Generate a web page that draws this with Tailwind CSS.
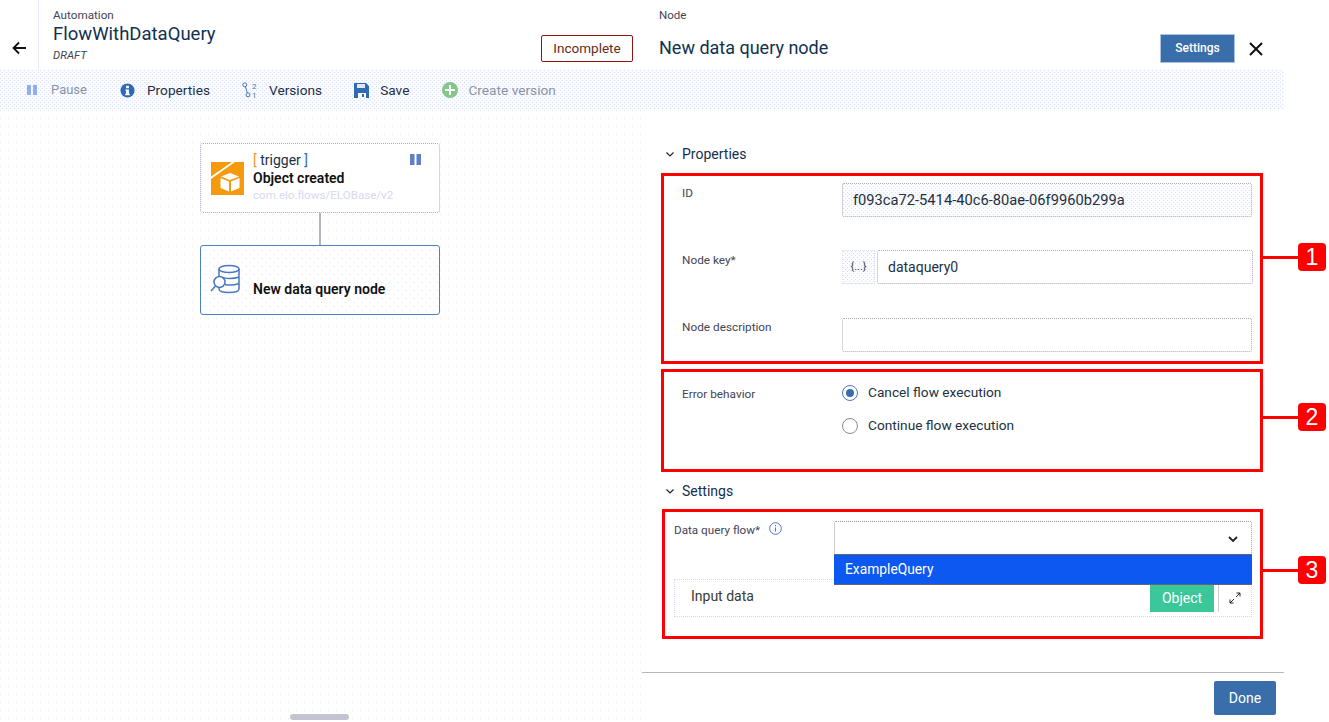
<!DOCTYPE html>
<html lang="en">
<head>
  <meta charset="UTF-8">
  <title>FlowWithDataQuery</title>
  <script src="https://cdn.jsdelivr.net/npm/@tailwindcss/browser@4"></script>
</head>
<body class="bg-white text-[#22303f] font-['Roboto',sans-serif] w-[1329px] h-[722px] overflow-hidden relative">
  <div class="flex flex-col w-[1284px] h-[722px]">
    <!-- header -->
    <header class="flex h-[70px] shrink-0">
      <div class="w-[642px] flex">
        <div class="w-[39px] border-r border-[#eaeafb] flex items-center pt-[26px] pl-[12px]">
          <svg class="w-[14px] h-[14px]" viewBox="0 0 14 14" fill="none" stroke="#111" stroke-width="1.800"><path d="M14 7H1.500M7 1.500 1.500 7 7 12.500"/></svg>
        </div>
        <div class="pl-[14px] pt-[9px] flex-1">
          <div class="text-[11.7px] leading-[13px] text-[#445]">Automation</div>
          <div class="text-[18.5px] leading-[24px] text-[#12304f]">FlowWithDataQuery</div>
          <div class="text-[11.3px] leading-[13px] mt-[3px] italic text-[#445]">DRAFT</div>
        </div>
        <div class="pt-[35px] pr-[9px]">
          <div class="w-[92px] h-[27px] border border-[#8e1414] rounded-[2px] text-[13.5px] text-[#6a2a1a] flex items-center justify-center">Incomplete</div>
        </div>
      </div>
      <div class="w-[642px] pl-[17px] relative">
        <div class="text-[11.5px] leading-[13px] pt-[9px] text-[#445]">Node</div>
        <div class="flex items-center mt-[12px] h-[29px]">
          <div class="text-[18px] text-[#12304f] flex-1 pb-[2px]">New data query node</div>
          <div class="w-[75px] h-[29px] bg-[#3a6eab] border border-[#a9c4e4] text-white text-[12px] font-medium flex items-center justify-center pb-[1px]">Settings</div>
          <svg class="w-[14px] h-[14px] ml-[14px] mr-[21px]" viewBox="0 0 14 14" fill="none" stroke="#111" stroke-width="2"><path d="M1 1l12 12M13 1 1 13"/></svg>
        </div>
      </div>
    </header>

    <!-- toolbar -->
    <div class="h-[40px] shrink-0 bg-[#fbfcff] bg-[conic-gradient(at_1px_1px,transparent_75%,#d8deff_0),conic-gradient(at_1px_1px,transparent_75%,#d8deff_0)] bg-[size:4px_4px] bg-[position:0_0,2px_2px] flex items-center pl-[26px] text-[13.7px] text-[#22303f]">
      <svg class="w-[12px] h-[12px]" viewBox="0 0 12 12" fill="#8fb0ee"><path d="M1 1h4v10H1zM7 1h4v10H7z"/></svg>
      <span class="ml-[13px] text-[13px] text-[#8a93a3]">Pause</span>
      <svg class="w-[15px] h-[15px] ml-[33px]" viewBox="0 0 16 16"><circle cx="8" cy="8" r="7.500" fill="#2f6bb0"/><path d="M6.500 3h3v2.500h-3zM5.800 7h3.700v4.500h1V13H5.500v-1.500h1V8.300h-.7z" fill="#fff"/></svg>
      <span class="ml-[12px]">Properties</span>
      <svg class="w-[16px] h-[16px] ml-[32px]" viewBox="0 0 16 16" fill="none" stroke="#3f74c0" font-family="Roboto, sans-serif"><circle cx="2.800" cy="2.800" r="2"/><circle cx="6" cy="12.800" r="2"/><path d="M3.500 4.800l1.800 6"/><text x="10" y="6.500" font-size="8" fill="#3f74c0" stroke="none">2</text><text x="10" y="15.500" font-size="8" fill="#3f74c0" stroke="none">1</text></svg>
      <span class="ml-[11px]">Versions</span>
      <svg class="w-[15px] h-[15px] ml-[32px]" viewBox="0 0 15 15"><path d="M0 0h12l3 3v12H0z" fill="#2f6bb0"/><path d="M3 1h8v4H3z" fill="#dfe8f8"/><path d="M4 10h8v5H4z" fill="#fff"/><path d="M8 11h2v3H8z" fill="#2f6bb0"/></svg>
      <span class="ml-[11px]">Save</span>
      <svg class="w-[16px] h-[16px] ml-[33px]" viewBox="0 0 16 16"><circle cx="8" cy="8" r="8" fill="#84c788"/><path d="M7 3h2v4h4v2H9v4H7V9H3V7h4z" fill="#fff"/></svg>
      <span class="ml-[10px] text-[#8a93a3]">Create version</span>
    </div>

    <main class="flex flex-1 min-h-0">
      <!-- canvas -->
      <section class="w-[642px] relative bg-[conic-gradient(at_1px_1px,transparent_75%,#e0e0ff_0)] bg-[size:8px_8px]">
        <div class="absolute left-[200px] top-[33px] w-[240px] h-[70px] bg-white border border-dotted border-[#a9a9c8] rounded-[3px] flex">
          <svg class="w-[33px] h-[33px] ml-[10px] mt-[18px] shrink-0" viewBox="0 0 33 33"><path d="M0 0h33v33H0z" fill="#f59a0c"/><path d="M0 17 24 0h-3L0 14.500z" fill="#fff"/><path d="M19 11l9 3.500-9 3.500-9-3.500z" fill="#fff"/><path d="M9.500 16l8.500 3.500v10L9.500 26zM20 19.500l8.500-3.500v10L20 29.500z" fill="#fff"/></svg>
          <div class="ml-[9px] pt-[8px] whitespace-nowrap">
            <div class="text-[14px] leading-[17px]"><span class="text-[#e89b2e]">[</span> trigger <span class="text-[#2f6bb0]">]</span></div>
            <div class="text-[14px] leading-[18px] font-semibold text-[#111]">Object created</div>
            <div class="text-[11.6px] leading-[17px] text-[#d8d8f0]">com.elo.flows/ELOBase/v2</div>
          </div>
          <svg class="absolute right-[18px] top-[10px] w-[11px] h-[11px]" viewBox="0 0 11 11" fill="#5f7fc8"><path d="M0 0h4.500v11H0zM6.500 0H11v11H6.500z"/></svg>
        </div>
        <div class="absolute left-[319px] top-[103px] w-[2px] h-[32px] bg-[#b4b4c2]"></div>
        <div class="absolute left-[200px] top-[135px] w-[240px] h-[70px] border border-[#4c7fc4] rounded-[3px] bg-white bg-[conic-gradient(at_1px_1px,transparent_75%,#e2e2ff_0),conic-gradient(at_1px_1px,transparent_75%,#e2e2ff_0)] bg-[size:8px_8px] bg-[position:0_0,4px_4px]">
          <svg class="absolute left-[9px] top-[18px] w-[32px] h-[32px]" viewBox="0 0 32 32" fill="none" stroke="#4a78c4" stroke-width="1.500"><ellipse cx="19" cy="5" rx="10" ry="3.500"/><path d="M9 5v20c0 2 4 3.500 10 3.500S29 27 29 25V5M12 13c3 2 12 2 17 0M15 20.500c5 1 10 .5 14-1"/><circle cx="9.500" cy="18" r="5.500" fill="#fff"/><path d="M5.500 22 1 27"/></svg>
          <div class="absolute left-[52px] top-[33px] text-[14px] font-semibold text-[#111] whitespace-nowrap">New data query node</div>
        </div>
        <div class="absolute left-[290px] top-[604px] w-[59px] h-[6px] rounded-[3px] bg-[#c4c4d0]"></div>
      </section>

      <!-- node panel -->
      <section class="w-[642px] flex flex-col">
        <div class="flex-1 pt-[34px]">
          <div class="flex items-center h-[20px] pl-[24px] text-[14px] text-[#12304f]">
            <svg class="w-[8px] h-[5px] mr-[8px]" viewBox="0 0 8 5" fill="none" stroke="#223" stroke-width="1.200"><path d="M.5.500 4 4 7.500.500"/></svg>
            Properties
          </div>
          <div class="pl-[40px] mt-[19px] text-[11.8px] text-[#445]">
            <div class="flex h-[34px]">
              <div class="w-[160px] pt-[2px]">ID</div>
              <div class="w-[410px] border border-dotted border-[#aab] bg-[#fbfcff] bg-[conic-gradient(at_1px_1px,transparent_75%,#d8deff_0),conic-gradient(at_1px_1px,transparent_75%,#d8deff_0)] bg-[size:4px_4px] bg-[position:0_0,2px_2px] rounded-[2px] text-[14.700px] text-[#22303f] pl-[10px] flex items-center">f093ca72-5414-40c6-80ae-06f9960b299a</div>
            </div>
            <div class="flex h-[34px] mt-[33px]">
              <div class="w-[160px] pt-[2px]">Node key*</div>
              <div class="w-[33px] border border-dotted border-[#dde] bg-[#fbfcff] bg-[conic-gradient(at_1px_1px,transparent_75%,#d8deff_0),conic-gradient(at_1px_1px,transparent_75%,#d8deff_0)] bg-[size:4px_4px] bg-[position:0_0,2px_2px] text-[11px] flex items-center justify-center">{...}</div>
              <div class="w-[376px] ml-[2px] border border-dotted border-[#aab] rounded-[2px] text-[14px] text-[#22303f] pl-[10px] flex items-center">dataquery0</div>
            </div>
            <div class="flex h-[34px] mt-[34px]">
              <div class="w-[160px] pt-[1px]">Node description</div>
              <div class="w-[410px] border border-dotted border-[#aab] rounded-[2px]"></div>
            </div>
            <div class="flex mt-[33px]">
              <div class="w-[160px] pt-[1px]">Error behavior</div>
              <div class="text-[13.7px] text-[#22303f]">
                <div class="flex items-center h-[16px]">
                  <span class="w-[16px] h-[16px] rounded-full border border-[#4a78c4] flex items-center justify-center"><span class="w-[8px] h-[8px] rounded-full bg-[#3a6eab]"></span></span>
                  <span class="ml-[10px] pb-[1px]">Cancel flow execution</span>
                </div>
                <div class="flex items-center h-[16px] mt-[17px]">
                  <span class="w-[16px] h-[16px] rounded-full border border-[#889]"></span>
                  <span class="ml-[10px] pb-[1px]">Continue flow execution</span>
                </div>
              </div>
            </div>
          </div>
          <div class="flex items-center h-[20px] pl-[24px] mt-[47px] text-[14px] text-[#12304f]">
            <svg class="w-[8px] h-[5px] mr-[8px]" viewBox="0 0 8 5" fill="none" stroke="#223" stroke-width="1.200"><path d="M.5.500 4 4 7.500.500"/></svg>
            Settings
          </div>
          <div class="pl-[32px] mt-[20px]">
            <div class="flex h-[58px]">
              <div class="w-[160px] pt-[1px] text-[11.7px] text-[#445] flex items-start">
                <span>Data query flow*</span>
                <svg class="w-[13px] h-[13px] ml-[9px]" viewBox="0 0 13 13" fill="none" stroke="#4a78c4"><circle cx="6.500" cy="6.500" r="5.800"/><path d="M6.500 5.500v4M6.500 3v1.300"/></svg>
              </div>
              <div class="w-[418px] relative">
                <div class="h-[34px] border border-dotted border-[#99a] rounded-[2px] flex items-end justify-end pr-[13px] pb-[11px]">
                  <svg class="w-[10px] h-[7px]" viewBox="0 0 10 7" fill="none" stroke="#222" stroke-width="1.800"><path d="M1 1l4 4 4-4"/></svg>
                </div>
                <div class="absolute left-0 top-[33px] w-full h-[31px] z-10 bg-[#0c58f0] border-y border-[#666] text-white text-[13.8px] pl-[11px] flex items-center">ExampleQuery</div>
              </div>
            </div>
            <div class="w-[578px] h-[38px] border border-dotted border-[#d5d5f0] flex items-center pl-[16px] text-[14px] text-[#22303f]">
              <span class="flex-1 text-[#3a3a30] pb-[3px]">Input data</span>
              <span class="w-[64px] h-[27px] bg-[#3cc79a] text-white flex items-center justify-center">Object</span>
              <span class="w-[1px] h-[27px] bg-[#ccc] ml-[4px]"></span>
              <svg class="w-[12px] h-[12px] ml-[10px] mr-[10px]" viewBox="0 0 12 12" fill="none" stroke="#111" stroke-width=".9"><path d="M7 5l4-4M7.500 1H11v3.500M5 7l-4 4M1 7.500V11h3.500"/></svg>
            </div>
          </div>
        </div>
        <footer class="h-[50px] border-t border-[#b8b8b8] flex justify-end pr-[8px] pt-[8px]">
          <div class="w-[62px] h-[34px] rounded-[2px] bg-[#3a6eab] text-white text-[14px] flex items-center justify-center">Done</div>
        </footer>
      </section>
    </main>
  </div>

  <!-- red annotation overlays -->
  <div class="absolute left-[661px] top-[173px] w-[602px] h-[191px] border-[3px] border-[#f00]"></div>
  <div class="absolute left-[661px] top-[369px] w-[602px] h-[103px] border-[3px] border-[#f00]"></div>
  <div class="absolute left-[662px] top-[509px] w-[601px] h-[130px] border-[3px] border-[#f00]"></div>
  <div class="absolute left-[1263px] top-[256px] w-[36px] h-[3px] bg-[#f00]"></div>
  <div class="absolute left-[1263px] top-[416px] w-[36px] h-[3px] bg-[#f00]"></div>
  <div class="absolute left-[1263px] top-[569px] w-[36px] h-[3px] bg-[#f00]"></div>
  <div class="absolute left-[1298px] top-[243px] w-[28px] h-[28px] rounded-[4px] bg-[#f00] text-white text-[23px] font-['Liberation_Sans',sans-serif] flex items-center justify-center">1</div>
  <div class="absolute left-[1298px] top-[403px] w-[28px] h-[28px] rounded-[4px] bg-[#f00] text-white text-[23px] font-['Liberation_Sans',sans-serif] flex items-center justify-center">2</div>
  <div class="absolute left-[1298px] top-[556px] w-[28px] h-[28px] rounded-[4px] bg-[#f00] text-white text-[23px] font-['Liberation_Sans',sans-serif] flex items-center justify-center">3</div>
</body>
</html>
